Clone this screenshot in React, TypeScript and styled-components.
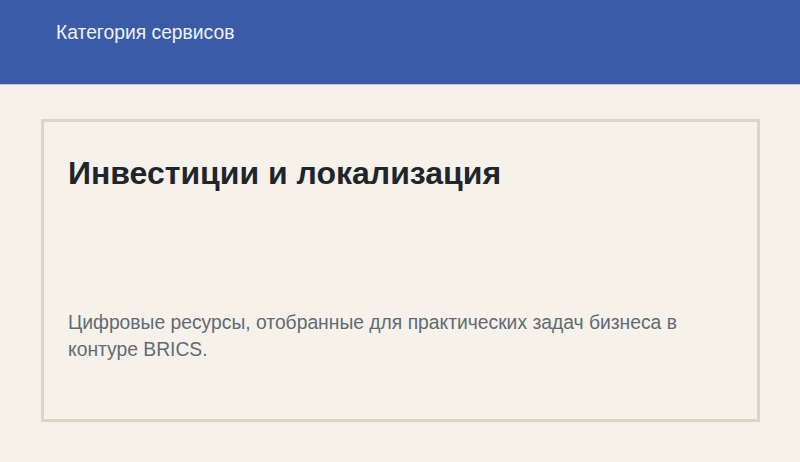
import React from 'react';
import styled, { createGlobalStyle } from 'styled-components';

const GlobalStyle = createGlobalStyle`
  body {
    margin: 0;
    background: #f5f1e9;
    font-family: 'Liberation Sans', Arial, sans-serif;
  }
`;

const Header = styled.header`
  height: 85px;
  background: #3a5ba5;
  border-bottom: 1px solid #c9c6bd;
  display: flex;
  align-items: center;
  padding: 0 56px 18px;
  box-sizing: border-box;
`;

const HeaderTitle = styled.span`
  color: #eef1f8;
  font-size: 19.3px;
`;

const Main = styled.main`
  padding: 34px 40px 40px 41px;
`;

const Card = styled.section`
  height: 303px;
  box-sizing: border-box;
  border: 3px solid #dad6c6;
  background: #f6f2ea;
  padding: 32px 24px 24px;
  display: flex;
  flex-direction: column;
`;

const Title = styled.h1`
  margin: 0;
  font-size: 32px;
  line-height: 1.2;
  font-weight: 700;
  color: #1f252c;
`;

const Description = styled.p`
  margin: auto 0 32px;
  max-width: 640px;
  font-size: 19.3px;
  line-height: 27px;
  color: #5f6b76;
`;

const App: React.FC = () => (
  <>
    <GlobalStyle />
    <Header>
      <HeaderTitle>Категория сервисов</HeaderTitle>
    </Header>
    <Main>
      <Card>
        <Title>Инвестиции и локализация</Title>
        <Description>
          Цифровые ресурсы, отобранные для практических задач бизнеса в контуре BRICS.
        </Description>
      </Card>
    </Main>
  </>
);

export default App;
